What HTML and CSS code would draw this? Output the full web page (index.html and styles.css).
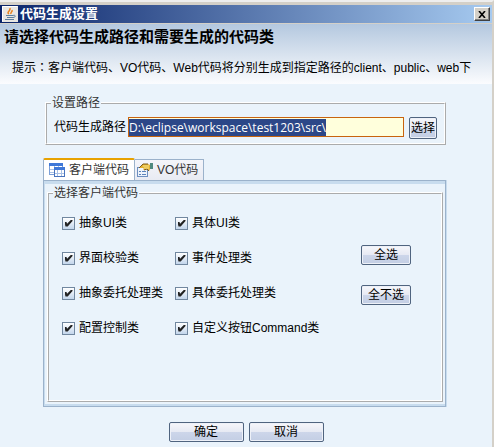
FILE: index.html
```html
<!DOCTYPE html>
<html lang="zh-CN">
<head>
    <meta charset="UTF-8">
    <meta name="viewport" content="width=device-width, initial-scale=1.0">
    <title>代码生成设置</title>
    <link rel="stylesheet" href="styles.css">
</head>
<body>
    <div class="dialog">
        <div class="titlebar">
            <svg class="app-icon" width="16" height="16" viewBox="0 0 16 16">
                <rect width="16" height="16" fill="#e8e6e2"/>
                <path d="M0.500 15.500V0.500H15.500" fill="none" stroke="#fff"/>
                <path d="M7 8C4 6 9 5 8 2M9 8C8 6 11 6 10 4" fill="none" stroke="#e8811c" stroke-width="1.500"/>
                <path d="M4 9.500h7M5 11.500h6M3 13.500h9M11 9.500c3-1 3 2 0 2" fill="none" stroke="#5b7f9e"/>
            </svg>
            <span class="title">代码生成设置</span>
            <button class="close" type="button" aria-label="关闭">
                <svg width="8" height="7" viewBox="0 0 8 7"><path d="M1 0l6 7M7 0L1 7" stroke="#000" stroke-width="1.600"/></svg>
            </button>
        </div>

        <div class="banner">
            <h1>请选择代码生成路径和需要生成的代码类</h1>
            <p>提示<span class="colon" lang="zh-TW">：</span>客户端代码、VO代码、Web代码将分别生成到指定路径的client、public、web下</p>
        </div>

        <div class="content">
            <fieldset class="path-group">
                <legend>设置路径</legend>
                <div class="path-row">
                    <label for="path">代码生成路径</label>
                    <input type="text" id="path" value="D:\eclipse\workspace\test1203\src\" spellcheck="false">
                    <button class="btn browse" type="button">选择</button>
                </div>
            </fieldset>

            <div class="tabs">
                <button class="tab active" type="button">
                    <svg width="16" height="14" viewBox="0 0 16 14">
                        <rect x="0.500" y="0.500" width="13" height="11" fill="#fff" stroke="#7b9fd8"/>
                        <rect width="14" height="3" fill="#3f78d8"/>
                        <path d="M1 6.500h12M1 9.500h12M5.500 3v8M9.500 3v8" stroke="#a9c1e6"/>
                        <rect x="5.500" y="4.500" width="10" height="9" fill="#fff" stroke="#4a74bd"/>
                        <rect x="5" y="4" width="11" height="3" fill="#3f78d8"/>
                        <path d="M6 10.500h9M8.500 7v6M12.500 7v6" stroke="#a9c1e6"/>
                    </svg>
                    客户端代码
                </button>
                <button class="tab" type="button">
                    <svg width="16" height="14" viewBox="0 0 16 14">
                        <rect x="0.500" y="4.500" width="10" height="9" fill="#edf3fb" stroke="#6d8fc0"/>
                        <path d="M2 8.500h2M5 8.500h4M2 11.500h2M5 11.500h4" stroke="#5b83bb"/>
                        <path d="M2 5L6 1h5l2 1v4l-1 2-2-2-3 1-1-1 1-1z" fill="#e3b030"/>
                        <path d="M2 5L6 1h5M7 7l3-1 2 2" fill="none" stroke="#7b5a1c"/>
                        <path d="M6 3h6M7 5h5" stroke="#fbe88a"/>
                        <rect x="13" y="0" width="3" height="6" fill="#4f8a80"/>
                    </svg>
                    VO代码
                </button>
            </div>
            <div class="tab-panel">
                <fieldset class="class-group">
                    <legend>选择客户端代码</legend>
                    <div class="class-row">
                        <div class="checks">
                            <label><input type="checkbox" checked>抽象UI类</label>
                            <label><input type="checkbox" checked>具体UI类</label>
                            <label><input type="checkbox" checked>界面校验类</label>
                            <label><input type="checkbox" checked>事件处理类</label>
                            <label><input type="checkbox" checked>抽象委托处理类</label>
                            <label><input type="checkbox" checked>具体委托处理类</label>
                            <label><input type="checkbox" checked>配置控制类</label>
                            <label><input type="checkbox" checked>自定义按钮Command类</label>
                        </div>
                        <div class="side-buttons">
                            <button class="btn" type="button" onclick="checkAll(true)">全选</button>
                            <button class="btn" type="button" onclick="checkAll(false)">全不选</button>
                        </div>
                    </div>
                </fieldset>
            </div>
        </div>

        <div class="footer">
            <button class="btn" type="button">确定</button>
            <button class="btn" type="button">取消</button>
        </div>
    </div>

    <script>
        function checkAll(state) {
            document.querySelectorAll('.checks input').forEach(box => {
                box.checked = state;
            });
        }

        const path = document.getElementById('path');
        path.focus();
        path.select();
    </script>
</body>
</html>
```
FILE: styles.css
```css
* {
    box-sizing: border-box;
}
body {
    margin: 0;
    background-color: #eaf3fb;
    color: #000;
    font: 12px/16px "Liberation Sans", "Noto Sans CJK SC", sans-serif;
}
button, input {
    font: inherit;
    color: inherit;
}
.dialog {
    min-height: 100vh;
    border-top: 2px solid #eeeeee;
    border-right: 2px solid #d4d0c8;
    overflow: hidden;
}
.titlebar {
    display: flex;
    align-items: center;
    gap: 2px;
    height: 22px;
    padding: 0 2px;
    border-top: 3px solid #d4d0c8;
    border-bottom: 1px solid #d4d0c8;
    background: linear-gradient(to right, #0a246a, #a6caf0);
}
.title {
    flex: 1;
    color: #fff;
    font-size: 13px;
    font-weight: bold;
}
.close {
    display: flex;
    align-items: center;
    justify-content: center;
    width: 16px;
    height: 14px;
    padding: 0;
    background-color: #d4d0c8;
    border: 1px solid;
    border-color: #fff #404040 #404040 #fff;
    box-shadow: inset -1px -1px 0 #808080;
}
.banner {
    height: 60px;
    padding: 2px 4px 0;
    background: linear-gradient(#b4c8df, #fbfcfe);
}
.banner h1 {
    margin: 0;
    font-size: 15px;
    line-height: 22px;
    white-space: nowrap;
}
.banner p {
    margin: 12px 0 0 8px;
    white-space: nowrap;
}
.colon {
    font-family: "Noto Sans CJK TC", sans-serif;
    line-height: 1;
}
.content {
    margin: 11px 46px 0 43px;
}
fieldset {
    min-width: 0;
    margin: 0;
    padding: 0;
    border: 2px ridge #fff;
}
legend {
    margin-left: 4px;
    padding: 0 1px;
    color: #333;
}
.path-group {
    margin: 0 0 0 2px;
}
.path-row {
    display: flex;
    align-items: flex-start;
    gap: 2px;
    padding: 6px 7px 4px;
}
.path-row label {
    line-height: 20px;
}
.path-row input {
    flex: 1;
    min-width: 0;
    height: 20px;
    padding: 0;
    background-color: #ffffdc;
    border: 1px solid #c8640f;
    outline: none;
    font-family: "Open Sans", sans-serif;
    line-height: 18px;
}
.path-row input::selection {
    background-color: #2c4788;
    color: #fff;
}
.btn {
    height: 20px;
    padding: 0;
    background: linear-gradient(#f7f7fb, #e6e9f3 50%, #cdd6ea 50%, #c3cee4);
    border: 1px solid #50647f;
    border-radius: 2px;
    box-shadow: inset 0 0 0 1px #eef1f8;
    line-height: 18px;
}
.path-row .browse {
    width: 28px;
    height: 22px;
    margin-left: 3px;
}
.tabs {
    display: flex;
    align-items: flex-end;
    margin-top: 13px;
}
.tab {
    display: flex;
    align-items: center;
    gap: 4px;
    height: 21px;
    padding: 0 5px 0 2px;
    background: linear-gradient(#f4f5fa, #e8ebf3);
    border: 1px solid #9bb2cb;
    border-width: 1px 1px 0 0;
    color: #333;
}
.tab.active {
    height: 22px;
    padding: 0 5px;
    background: #fff;
    border-width: 0 1px;
    border-top: 2px solid #e8a200;
    border-radius: 2px 2px 0 0;
}
.tab-panel {
    padding: 2px 0 1px 1px;
    border: 1px solid #9bb2cb;
    box-shadow: inset 0 3px 0 #c8dcee, inset 0 -2px 0 #c8dcee, inset 1px 0 0 #c8dcee, 1px 0 0 #c8dcee;
}
.class-group {
    margin: 2px 2px 3px;
}
.class-row {
    display: flex;
    justify-content: space-between;
    height: 199px;
    padding: 14px 30px 0 13px;
}
.checks {
    display: grid;
    grid-template-columns: 113px auto;
    grid-auto-rows: 16px;
    row-gap: 19px;
}
.checks label {
    display: flex;
    align-items: center;
    gap: 4px;
    white-space: nowrap;
}
.checks input {
    appearance: none;
    display: flex;
    align-items: center;
    justify-content: center;
    width: 13px;
    height: 13px;
    margin: 0;
    background: linear-gradient(#fff, #c3d6ec);
    border: 1px solid #71879f;
}
.checks input:checked::before {
    content: "";
    width: 8px;
    height: 7px;
    background-color: #222;
    clip-path: polygon(0 35%, 25% 35%, 32% 60%, 85% 0, 100% 0, 100% 20%, 40% 100%, 12% 100%);
}
.side-buttons {
    display: flex;
    flex-direction: column;
    gap: 20px;
    padding-top: 30px;
}
.side-buttons .btn {
    width: 50px;
}
.footer {
    display: flex;
    justify-content: center;
    gap: 5px;
    padding: 15px 0 5px;
}
.footer .btn {
    width: 75px;
}
```
